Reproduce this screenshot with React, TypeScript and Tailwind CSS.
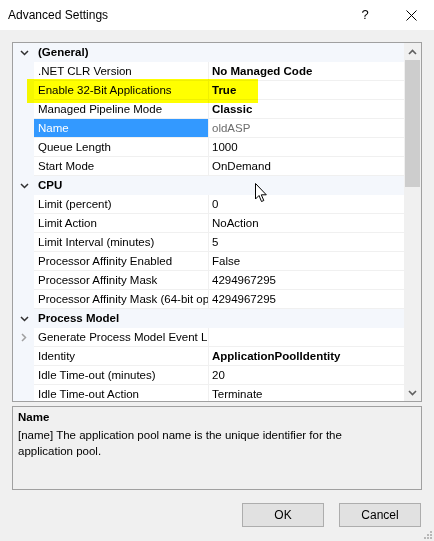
import React from "react";

type Row =
  | { kind: "header"; label: string }
  | { kind: "prop"; label: string; value: string; bold?: boolean; selected?: boolean; expand?: boolean };

const rows: Row[] = [
  { kind: "header", label: "(General)" },
  { kind: "prop", label: ".NET CLR Version", value: "No Managed Code", bold: true },
  { kind: "prop", label: "Enable 32-Bit Applications", value: "True", bold: true },
  { kind: "prop", label: "Managed Pipeline Mode", value: "Classic", bold: true },
  { kind: "prop", label: "Name", value: "oldASP", selected: true },
  { kind: "prop", label: "Queue Length", value: "1000" },
  { kind: "prop", label: "Start Mode", value: "OnDemand" },
  { kind: "header", label: "CPU" },
  { kind: "prop", label: "Limit (percent)", value: "0" },
  { kind: "prop", label: "Limit Action", value: "NoAction" },
  { kind: "prop", label: "Limit Interval (minutes)", value: "5" },
  { kind: "prop", label: "Processor Affinity Enabled", value: "False" },
  { kind: "prop", label: "Processor Affinity Mask", value: "4294967295" },
  { kind: "prop", label: "Processor Affinity Mask (64-bit option)", value: "4294967295" },
  { kind: "header", label: "Process Model" },
  { kind: "prop", label: "Generate Process Model Event Log Entry", value: "", expand: true },
  { kind: "prop", label: "Identity", value: "ApplicationPoolIdentity", bold: true },
  { kind: "prop", label: "Idle Time-out (minutes)", value: "20" },
  { kind: "prop", label: "Idle Time-out Action", value: "Terminate" },
];

function ChevronDown() {
  return (
    <svg width="9" height="6" viewBox="0 0 9 6">
      <path d="M1 1 L4.5 4.5 L8 1" fill="none" stroke="#303030" strokeWidth="1.5" />
    </svg>
  );
}

function ChevronRight() {
  return (
    <svg width="6" height="9" viewBox="0 0 6 9">
      <path d="M1 1 L4.5 4.5 L1 8" fill="none" stroke="#a0a0a0" strokeWidth="1.5" />
    </svg>
  );
}

export default function App() {
  return (
    <div
      className="relative w-[434px] h-[541px] bg-[#f0f0f0] flex flex-col overflow-hidden text-[#000]"
      style={{ fontFamily: '"Liberation Sans", Arial, sans-serif' }}
    >
      {/* Title bar */}
      <div className="h-[30px] bg-white flex items-center shrink-0">
        <div className="pl-[8px] text-[12px] flex-1">Advanced Settings</div>
        <div className="w-[46px] h-[30px] flex items-center justify-center text-[13px]">?</div>
        <div className="w-[46px] h-[30px] flex items-center justify-center">
          <svg width="11" height="11" viewBox="0 0 11 11">
            <path d="M0.5 0.5 L10.5 10.5 M10.5 0.5 L0.5 10.5" stroke="#000" strokeWidth="1" />
          </svg>
        </div>
      </div>

      {/* Body */}
      <div className="flex flex-col px-[12px] pt-[12px] flex-1">
        {/* Property grid */}
        <div className="relative h-[360px] w-[410px] border border-[#a0a0a0] bg-white flex">
          <div className="flex-1 flex flex-col overflow-hidden">
            {rows.map((r, i) =>
              r.kind === "header" ? (
                <div key={i} className="h-[19px] shrink-0 bg-[#f4f7fc] flex items-center">
                  <div className="w-[21px] flex justify-center pl-[1px]">
                    <ChevronDown />
                  </div>
                  <div className="pl-[4px] pt-[1px] text-[11.5px] font-bold">{r.label}</div>
                </div>
              ) : (
                <div key={i} className="h-[19px] shrink-0 flex">
                  <div className="w-[21px] bg-[#f4f7fc] flex items-center justify-center">
                    {r.expand ? <ChevronRight /> : null}
                  </div>
                  <div
                    className={
                      "w-[174px] border-b border-[#f0f0f0] flex items-center pl-[4px] pt-[1px] text-[11.5px] whitespace-nowrap overflow-hidden " +
                      (r.selected ? "bg-[#3399ff] text-white" : "")
                    }
                  >
                    {r.label}
                  </div>
                  <div
                    className={
                      "flex-1 border-b border-l border-[#f0f0f0] flex items-center pl-[3px] pt-[1px] text-[11.5px] whitespace-nowrap " +
                      (r.bold ? "font-bold " : "") +
                      (r.selected ? "text-[#6d6d6d]" : "")
                    }
                  >
                    {r.value}
                  </div>
                </div>
              )
            )}
          </div>
          {/* Scrollbar */}
          <div className="w-[17px] bg-[#f0f0f0] flex flex-col shrink-0">
            <div className="h-[17px] flex items-center justify-center">
              <svg width="9" height="6" viewBox="0 0 9 6">
                <path d="M1 5 L4.5 1.5 L8 5" fill="none" stroke="#606060" strokeWidth="1.6" />
              </svg>
            </div>
            <div className="mx-[1px] h-[127px] bg-[#cdcdcd]" />
            <div className="flex-1" />
            <div className="h-[17px] flex items-center justify-center">
              <svg width="9" height="6" viewBox="0 0 9 6">
                <path d="M1 1 L4.5 4.5 L8 1" fill="none" stroke="#606060" strokeWidth="1.6" />
              </svg>
            </div>
          </div>
        </div>

        {/* Description */}
        <div className="mt-[4px] h-[84px] w-[410px] border border-[#a0a0a0] px-[5px] pt-[2px] text-[11.5px] leading-[16px]">
          <div className="font-bold">Name</div>
          <div className="pt-[2px] pr-[60px]">
            [name] The application pool name is the unique identifier for the application pool.
          </div>
        </div>

        {/* Buttons */}
        <div className="mt-[13px] flex justify-end gap-[15px] pr-[1px]">
          <button className="w-[82px] h-[24px] bg-[#e1e1e1] border border-[#adadad] text-[12px]">OK</button>
          <button className="w-[82px] h-[24px] bg-[#e1e1e1] border border-[#adadad] text-[12px]">Cancel</button>
        </div>
      </div>

      {/* Yellow highlight overlay */}
      <div className="absolute left-[27px] top-[79px] w-[231px] h-[24px] bg-[#ffff00] mix-blend-multiply pointer-events-none" />

      {/* Mouse cursor */}
      <svg className="absolute left-[255px] top-[183px]" width="13" height="20" viewBox="0 0 13 20">
        <path d="M0.5 0.5 L0.5 16 L4 12.5 L6.5 18.5 L8.8 17.5 L6.3 11.8 L11.3 11.8 Z" fill="#fff" stroke="#000" strokeWidth="1" strokeLinejoin="miter" />
      </svg>

      {/* Resize grip */}
      <svg className="absolute right-[1px] bottom-[1px]" width="12" height="12" viewBox="0 0 12 12">
        {[
          [9, 3],
          [9, 6],
          [6, 6],
          [9, 9],
          [6, 9],
          [3, 9],
        ].map(([x, y], i) => (
          <rect key={i} x={x} y={y} width="2" height="2" fill="#b8b8b8" />
        ))}
      </svg>
    </div>
  );
}
